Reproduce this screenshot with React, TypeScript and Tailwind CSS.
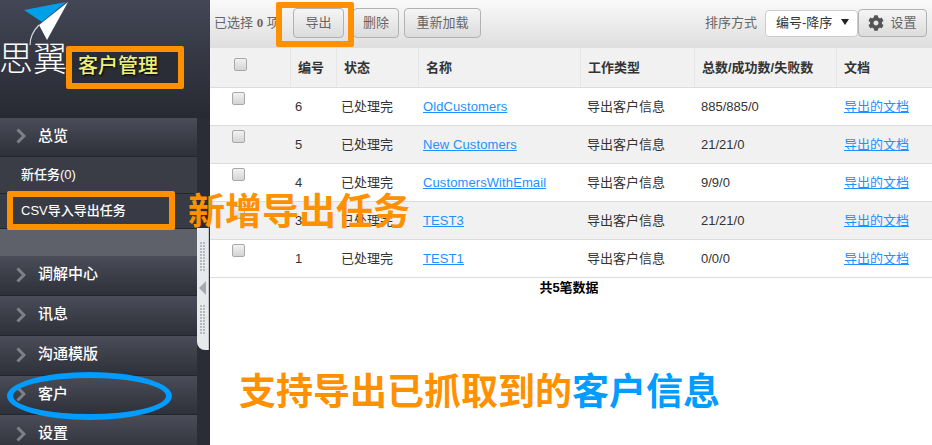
import React from 'react'
import { FaCog } from 'react-icons/fa'

const cjk = '[font-family:Arial,"Liberation_Sans","Noto_Sans_CJK_SC",sans-serif]'

const columns = ['w-[80px]', 'w-[46px]', 'w-[82px]', 'w-[162px]', 'w-[114px]', 'w-[142px]', 'flex-1']

const rows = [
  { id: '6', name: 'OldCustomers', count: '885/885/0' },
  { id: '5', name: 'New Customers', count: '21/21/0' },
  { id: '4', name: 'CustomersWithEmail', count: '9/9/0' },
  { id: '3', name: 'TEST3', count: '21/21/0' },
  { id: '1', name: 'TEST1', count: '0/0/0' }
]

function Chevron() {
  return (
    <svg width="10" height="16" viewBox="0 0 10 16" className="shrink-0">
      <path d="M1.5 1.5 L8 8 L1.5 14.5" fill="none" stroke="#7f8187" strokeWidth="3" />
    </svg>
  )
}

function NavItem({ label, height = 'h-[40px]' }: { label: string; height?: string }) {
  return (
    <div className={`flex ${height} shrink-0 items-center gap-[12px] border-b border-[#24262e] bg-gradient-to-b from-[#4a4d57] to-[#2e303a] pb-[2px] pl-[16px] text-[15px] font-medium text-white`}>
      <Chevron />
      <span>{label}</span>
    </div>
  )
}

function Checkbox({ className = '' }: { className?: string }) {
  return <div className={`h-[13px] w-[13px] rounded-[2px] border border-[#a8a8a8] bg-gradient-to-b from-[#f2f2f2] to-[#d4d4d4] ${className}`} />
}

function Button({ label, className = '' }: { label: string; className?: string }) {
  return (
    <div className={`flex h-[30px] items-center justify-center rounded-[4px] border border-[#b0b3b5] bg-gradient-to-b from-[#f5f5f5] to-[#dcdcdc] text-[13px] text-[#666] ${className}`}>
      {label}
    </div>
  )
}

function GripDots() {
  return (
    <div className="flex flex-col gap-[1px]">
      {Array.from({ length: 10 }).map((_, i) => (
        <div key={i} className="h-[2px] w-[6px] bg-[repeating-linear-gradient(90deg,#b8b9bd_0,#b8b9bd_2px,transparent_2px,transparent_3px)]" />
      ))}
    </div>
  )
}

function Sidebar() {
  return (
    <aside className="flex h-[445px] w-[210px] shrink-0 flex-col bg-[#2a2c36]">
      <div className="relative h-[118px] shrink-0 bg-gradient-to-b from-[#434655] to-[#272932]">
        <svg width="50" height="46" viewBox="0 0 50 46" className="absolute left-[22px] top-0">
          <path d="M2 10 L44 2 L20 22 Z" fill="#00a0e9" />
          <path d="M46 2 L17 25 L25 40 Z" fill="#ffffff" />
          <path d="M17 25 C12 30 8 36 8 45" fill="none" stroke="#d8dae0" strokeWidth="1.2" />
        </svg>
        <span className="absolute left-[-1px] top-[40px] text-[34px] font-light leading-[38px] text-white">思翼</span>
      </div>
      <div className="flex min-h-0 flex-1">
        <div className="flex w-[197px] flex-col overflow-hidden">
          <NavItem label="总览" height="h-[39px]" />
          <div className="flex h-[36px] shrink-0 items-center bg-[#3a3c46] pl-[21px] text-[13px] font-medium text-white">新任务(0)</div>
          <div className="flex h-[35px] shrink-0 items-center border-t border-[#24262e] bg-[#383a45] pl-[21px] text-[13px] font-medium text-white">CSV导入导出任务</div>
          <div className="h-[28px] shrink-0 border-t border-[#24262e] bg-[#5e616a]" />
          <NavItem label="调解中心" />
          <NavItem label="讯息" />
          <NavItem label="沟通模版" />
          <NavItem label="客户" height="h-[39px]" />
          <NavItem label="设置" />
        </div>
        <div className="mt-[110px] flex h-[122px] w-[12px] flex-col items-center rounded-bl-[8px] border-r border-[#c4c6cc] bg-[#e8e9ed] pt-[14px]">
          <GripDots />
          <svg width="8" height="14" viewBox="0 0 8 14" className="my-[10px]">
            <path d="M7 0 L0 7 L7 14 Z" fill="#a8aab0" />
          </svg>
          <GripDots />
        </div>
      </div>
    </aside>
  )
}

function Toolbar() {
  return (
    <div className="flex h-[48px] items-center bg-gradient-to-b from-[#fafafa] to-[#dedede] pb-[2px] pl-[4px] text-[13px] text-[#666]">
      <span className="w-[79px] whitespace-nowrap">已选择 <b className="[font-family:'Liberation_Serif',serif]">0</b> 项</span>
      <Button label="导出" className="w-[51px]" />
      <Button label="删除" className="ml-[9px] w-[46px]" />
      <Button label="重新加载" className="ml-[5px] w-[77px]" />
      <span className="ml-auto mr-[8px]">排序方式</span>
      <div className="flex h-[27px] w-[93px] items-center justify-between rounded-[4px] border border-[#ccc] bg-white pl-[10px] pr-[8px] text-[13px] text-[#333]">
        <span>编号-降序</span>
        <svg width="8" height="6" viewBox="0 0 8 6" className="mb-[2px]">
          <path d="M0 0 H8 L4 6 Z" fill="#222" />
        </svg>
      </div>
      <div className="mr-[5px] flex h-[28px] w-[69px] items-center justify-center gap-[6px] rounded-[4px] border border-[#b0b3b5] bg-gradient-to-b from-[#f5f5f5] to-[#dcdcdc]">
        <FaCog className="text-[16px] text-[#555]" />
        <span>设置</span>
      </div>
    </div>
  )
}

function HeaderRow() {
  const labels = ['编号', '状态', '名称', '工作类型', '总数/成功数/失败数', '文档']
  return (
    <div className="flex h-[40px] border-b border-[#dcdcdc] bg-[#f1f1f1] text-[13px] font-bold text-[#333]">
      <div className={`${columns[0]} flex items-center pb-[6px] pl-[24px]`}>
        <Checkbox />
      </div>
      {labels.map((label, i) => (
        <div key={label} className={`${columns[i + 1]} flex items-center whitespace-nowrap border-l border-[#e6e6e6] pl-[7px]`}>
          {label}
        </div>
      ))}
    </div>
  )
}

function DataRow({ row, striped }: { row: (typeof rows)[number]; striped: boolean }) {
  return (
    <div className={`flex h-[38px] items-center border-b border-[#dcdcdc] text-[13px] text-[#333] ${striped ? 'bg-[#f1f1f1]' : 'bg-white'}`}>
      <div className={`${columns[0]} flex h-full pl-[22px] pt-[4px]`}>
        <Checkbox />
      </div>
      <div className={`${columns[1]} pl-[5px]`}>{row.id}</div>
      <div className={`${columns[2]} pl-[5px]`}>已处理完</div>
      <div className={`${columns[3]} pl-[5px]`}>
        <span className="text-[13px] tracking-[0.1px] text-[#1e90ff] underline">{row.name}</span>
      </div>
      <div className={`${columns[4]} pl-[7px]`}>导出客户信息</div>
      <div className={`${columns[5]} pl-[7px]`}>{row.count}</div>
      <div className={`${columns[6]} pl-[8px]`}>
        <span className="text-[#1e90ff] underline">导出的文档</span>
      </div>
    </div>
  )
}

export default function App() {
  return (
    <div className={`relative flex h-[445px] w-[932px] overflow-hidden bg-white ${cjk}`}>
      <Sidebar />
      <main className="flex min-w-0 flex-1 flex-col">
        <Toolbar />
        <HeaderRow />
        {rows.map((row, i) => (
          <DataRow key={row.id} row={row} striped={i % 2 === 1} />
        ))}
        <div className="pr-[4px] pt-[2px] text-center text-[13px] font-bold leading-[16px] text-black">共5笔数据</div>
      </main>

      {/* annotations pasted over the screenshot */}
      <div className="absolute left-[66px] top-[46px] flex h-[43px] w-[118px] items-center rounded-[2px] border-[6px] border-[#ff9000] bg-[#2a2c36] pb-[3px] pl-[6px] text-[20px] font-medium text-[#eef07a] [text-shadow:1px_1px_2px_#000]">客户管理</div>
      <div className="absolute left-[7px] top-[191px] h-[39px] w-[168px] rounded-[2px] border-[6px] border-[#ff9000]" />
      <div className="absolute left-[276px] top-[2px] h-[45px] w-[78px] rounded-[2px] border-[6px] border-[#ff9000]" />
      <div className="absolute left-[188px] top-[190px] text-[37px] font-bold leading-[46px] text-[#ff9000]">新增导出任务</div>
      <div className="absolute left-[7px] top-[372px] h-[48px] w-[165px] rounded-[50%] border-[6px] border-[#009cff]" />
      <div className="absolute left-[239px] top-[369px] text-[37px] font-bold leading-[48px] text-[#ff9000]">
        支持导出已抓取到的<span className="text-[#009cff]">客户信息</span>
      </div>
    </div>
  )
}
